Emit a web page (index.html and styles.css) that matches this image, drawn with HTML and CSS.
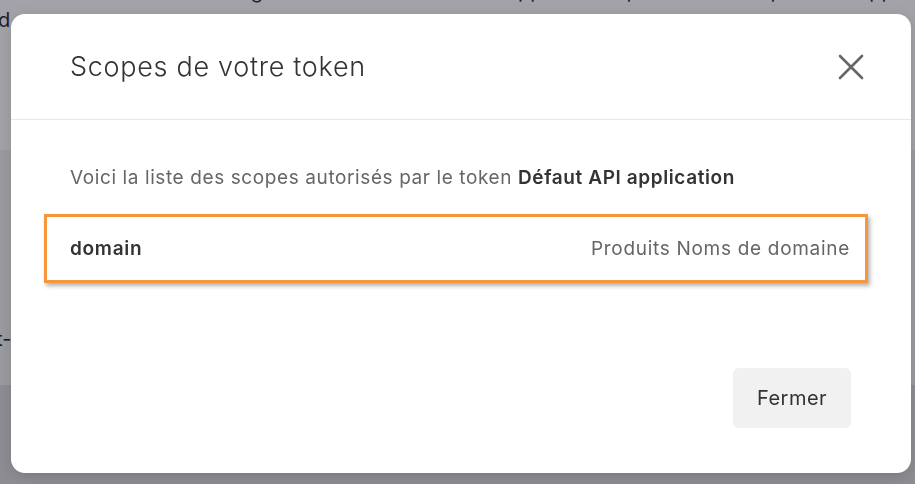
FILE: index.html
```html
<!DOCTYPE html>
<html lang="fr">
<head>
<meta charset="utf-8">
<title>Scopes de votre token</title>
<link rel="stylesheet" href="styles.css">
</head>
<body>
<div class="page">
  <div class="page-top">
    <p class="page-line page-line-cut">Configuration des tokens et des applications pour votre compte développeur</p>
    <p class="page-line page-line-d">d</p>
  </div>
  <div class="page-mid">
    <p class="page-line page-line-t">t-</p>
  </div>
  <div class="page-bottom"></div>
</div>

<div class="backdrop">
  <div class="modal" role="dialog" aria-labelledby="modal-title">
    <header class="modal-header">
      <h2 class="modal-title" id="modal-title">Scopes de votre token</h2>
      <button class="close-btn" aria-label="Fermer">
        <svg width="26" height="26" viewBox="0 0 26 26" aria-hidden="true">
          <path d="M2 2 L24 24 M24 2 L2 24" stroke="#666" stroke-width="2.6" stroke-linecap="round" fill="none"/>
        </svg>
      </button>
    </header>
    <div class="modal-body">
      <p class="intro">Voici la liste des scopes autorisés par le token <strong>Défaut API application</strong></p>
      <div class="scope-row">
        <span class="scope-name">domain</span>
        <span class="scope-desc">Produits Noms de domaine</span>
      </div>
    </div>
    <footer class="modal-footer">
      <button class="btn-close">Fermer</button>
    </footer>
  </div>
</div>
</body>
</html>
```

FILE: styles.css
```css
* { box-sizing: border-box; }

html, body {
  margin: 0;
  height: 100%;
}

body {
  font-family: Inter, "Noto Sans", "Liberation Sans", sans-serif;
  background: #cfcfd3;
  overflow: hidden;
}

.page {
  height: 100%;
  display: flex;
  flex-direction: column;
}

.page-top {
  height: 150px;
  background: #fbfbfd;
}

.page-mid {
  height: 235px;
  background: #f2f2f2;
  padding-top: 176px;
}

.page-bottom {
  flex: 1;
  background: #d8d8dc;
}

.page-line {
  margin: 0;
  font-size: 20px;
  line-height: 26px;
  color: #1d2330;
  white-space: nowrap;
}

.page-line-cut {
  margin-top: -22px;
  padding-left: 200px;
}

.page-line-d {
  margin-top: 3px;
  margin-left: -2px;
}

.page-line-t {
  margin-left: -4px;
}

.backdrop {
  position: fixed;
  inset: 0;
  background: rgba(30, 30, 40, 0.4);
  padding: 14px 4px 11px 11px;
  display: flex;
}

.modal {
  flex: 1;
  background: #fff;
  border-radius: 14px;
  display: flex;
  flex-direction: column;
  box-shadow: 0 4px 16px rgba(0, 0, 0, 0.15);
}

.modal-header {
  height: 106px;
  border-bottom: 1px solid #e8e8e8;
  display: flex;
  align-items: center;
  justify-content: space-between;
  padding: 0 47px 0 59px;
}

.modal-title {
  margin: 0;
  font-size: 27px;
  font-weight: 300;
  letter-spacing: 0.7px;
  color: #333;
}

.close-btn {
  border: 0;
  background: none;
  padding: 0;
  width: 26px;
  height: 26px;
  display: flex;
  cursor: pointer;
}

.modal-body {
  flex: 1;
  padding: 45px 43px 0 33px;
}

.intro {
  margin: 0 0 23px;
  padding-left: 26px;
  font-size: 19px;
  line-height: 26px;
  letter-spacing: 0.6px;
  color: #666;
}

.intro strong {
  color: #333;
  font-weight: 600;
}

.scope-row {
  height: 69px;
  border: 3px solid #f7963a;
  display: flex;
  align-items: center;
  justify-content: space-between;
  padding: 0 15px 0 23px;
  box-shadow: 2px 3px 4px rgba(0, 0, 0, 0.3);
  font-size: 19px;
  letter-spacing: 0.7px;
}

.scope-name {
  color: #333;
  font-weight: 600;
}

.scope-desc {
  color: #666;
}

.modal-footer {
  display: flex;
  justify-content: flex-end;
  padding: 0 60px 45px;
}

.btn-close {
  width: 118px;
  height: 60px;
  border: 0;
  border-radius: 6px;
  background: #f1f1f1;
  font-family: inherit;
  font-size: 20px;
  letter-spacing: 0.5px;
  color: #333;
  cursor: pointer;
}
```
